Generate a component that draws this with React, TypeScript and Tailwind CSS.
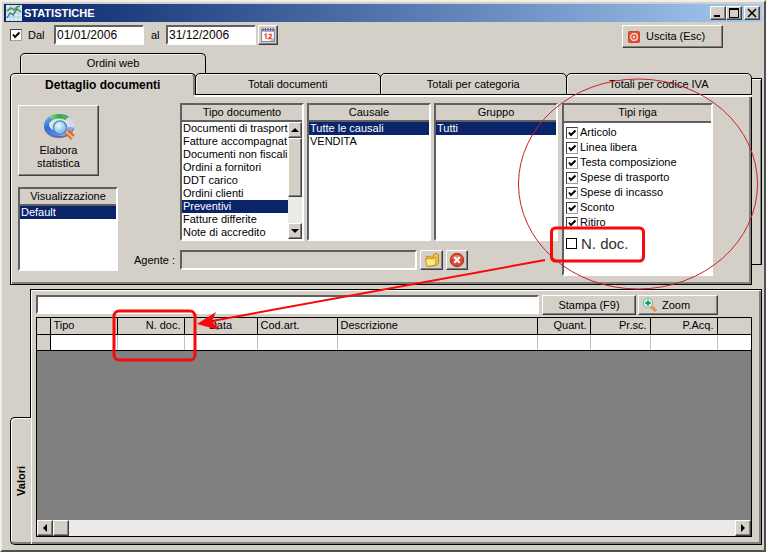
import React from 'react';
import clsx from 'clsx';

const raised =
  'bg-[#d4d0c8] border border-t-white border-l-white border-r-[#404040] border-b-[#404040] shadow-[inset_-1px_-1px_0_#808080]';
const sunken =
  'border-2 border-t-[#606060] border-l-[#606060] border-r-white border-b-white';

const documentTypes = [
  'Documenti di trasport',
  'Fatture accompagnat',
  'Documenti non fiscali',
  'Ordini a fornitori',
  'DDT carico',
  'Ordini clienti',
  'Preventivi',
  'Fatture differite',
  'Note di accredito',
];

const rowTypes = [
  'Articolo',
  'Linea libera',
  'Testa composizione',
  'Spese di trasporto',
  'Spese di incasso',
  'Sconto',
  'Ritiro',
];

const columns = [
  { title: '', width: 'w-[13px]', align: 'text-left' },
  { title: 'Tipo', width: 'w-[67px]', align: 'text-left' },
  { title: 'N. doc.', width: 'w-[67px]', align: 'text-right' },
  { title: 'Data', width: 'w-[73px]', align: 'text-center' },
  { title: 'Cod.art.', width: 'w-[80px]', align: 'text-left' },
  { title: 'Descrizione', width: '', align: 'text-left' },
  { title: 'Quant.', width: 'w-[53px]', align: 'text-right' },
  { title: 'Pr.sc.', width: 'w-[60px]', align: 'text-right' },
  { title: 'P.Acq.', width: 'w-[67px]', align: 'text-right' },
  { title: '', width: 'w-[34px]', align: 'text-left' },
];

const Arrow = ({ d }: { d: string }) => (
  <svg viewBox="0 0 8 8" className="size-2" fill="black">
    <path d={d} />
  </svg>
);

const ChartIcon = () => (
  <svg viewBox="0 0 16 16" className="size-4">
    <rect width="16" height="16" fill="#dcebf3" />
    <path d="M0 4H16M0 8H16M0 12H16M4 0V16M8 0V16M12 0V16" stroke="#9fc0d3" strokeWidth=".7" />
    <path d="M1 6L5 3L8 5L11 2L14 1" fill="none" stroke="#4b9a48" strokeWidth="1.6" />
    <path d="M1 13L4 8L7 10L11 4L15 7" fill="none" stroke="#3f7f6c" strokeWidth="1.4" />
  </svg>
);

const CalendarIcon = () => (
  <svg viewBox="0 0 16 16" className="size-4">
    <rect x="1.5" y="2.5" width="13" height="12" fill="#f8f7ff" stroke="#8289b4" />
    <path d="M2 3H14V5H2Z" fill="#aab0cf" />
    <path d="M3 1V4M5.5 1V4M8 1V4M10.5 1V4M13 1V4" stroke="#5d6074" />
    <path d="M4.5 8L6 7V12M8.5 8Q11.5 6 11.5 8.5L8.5 11.5H12" fill="none" stroke="#ed5a24" strokeWidth="1.4" />
    <path d="M10 14L14 10V14Z" fill="#b9bcdd" />
  </svg>
);

const ExitIcon = () => (
  <svg viewBox="0 0 12 12" className="size-3">
    <rect x=".5" y=".5" width="11" height="11" rx="1" fill="#df5437" stroke="#c8452c" />
    <circle cx="6" cy="6" r="3.4" fill="none" stroke="#ffe1d5" strokeWidth="1.2" />
    <circle cx="6" cy="6" r="1.2" fill="#ffe1d5" />
  </svg>
);

const AnalyzeIcon = () => (
  <svg viewBox="0 0 32 30" className="h-[30px] w-8">
    <defs>
      <linearGradient id="ringBlue" x1="0" y1="0" x2="1" y2="1">
        <stop offset="0" stopColor="#9cc8f2" />
        <stop offset=".35" stopColor="#2f6fd6" />
        <stop offset="1" stopColor="#7aa5ea" />
      </linearGradient>
      <linearGradient id="ringGreen" x1="0" y1="0" x2="1" y2="0">
        <stop offset="0" stopColor="#8ad98a" />
        <stop offset=".5" stopColor="#34b02c" />
        <stop offset="1" stopColor="#4fbf48" />
      </linearGradient>
      <radialGradient id="lens" cx=".4" cy=".35">
        <stop offset="0" stopColor="#effaff" />
        <stop offset="1" stopColor="#86c6ee" />
      </radialGradient>
    </defs>
    <ellipse cx="16" cy="15" rx="15" ry="11" fill="#5f68b4" />
    <ellipse cx="16" cy="13" rx="15" ry="11" fill="url(#ringBlue)" />
    <path d="M16 13L6 4.800Q14 0 26 4.800Z" fill="url(#ringGreen)" />
    <path d="M16 13L26 4.800Q33 9 30.500 16Z" fill="#d9d6f0" />
    <path d="M16 13L30.500 16Q28 23 17 24Z" fill="#a5a0da" />
    <ellipse cx="16" cy="13" rx="10" ry="6.500" fill="#dfe6f0" />
    <path d="M22 20L29 27M25 18.500L31 24" stroke="#d9722a" strokeWidth="2.500" />
    <path d="M23 19.500L29.500 25.500" stroke="#fbc48c" strokeWidth="1.500" />
    <circle cx="17" cy="15.500" r="6.600" fill="url(#lens)" stroke="#4f86c6" strokeWidth="1.400" />
  </svg>
);

const FolderIcon = () => (
  <svg viewBox="0 0 16 16" className="size-4">
    <path d="M2 5L6 4L7.500 5.500L9.500 5V2.500L13 1.500L14.500 3V11L12 13.500L3 14.500Z" fill="#f2c94a" stroke="#b78a1c" />
    <path d="M1.500 7L7 6.500L8.500 7L12 5L11.500 13L3 14.500Z" fill="#fdea7c" stroke="#c59a27" />
  </svg>
);

const CancelIcon = () => (
  <svg viewBox="0 0 16 16" className="size-4">
    <circle cx="8" cy="8" r="6.700" fill="#d9472b" stroke="#a8321d" />
    <path d="M3 6Q8 0 13 6Q8 8 3 6" fill="#ee8468" />
    <path d="M5.300 5.300L10.700 10.700M10.700 5.300L5.300 10.700" stroke="white" strokeWidth="2.200" />
  </svg>
);

const ZoomIcon = () => (
  <svg viewBox="0 0 16 16" className="size-4">
    <path d="M9 9L14 14" stroke="#d98532" strokeWidth="3" />
    <path d="M9.500 9L14 13.500" stroke="#ffc887" strokeWidth="1" />
    <circle cx="6" cy="6" r="4.700" fill="#d2f0e0" stroke="#7fb5a8" />
    <path d="M6 3.300V8.700M3.300 6H8.700" stroke="#159a54" strokeWidth="1.800" />
  </svg>
);

const CheckBox = ({ id, checked }: { id: string; checked?: boolean }) => (
  <span className="relative block size-3 shrink-0">
    <input
      id={id}
      type="checkbox"
      defaultChecked={checked}
      className="peer block size-3 appearance-none border border-t-[#404040] border-l-[#404040] border-r-[#a0a0a0] border-b-[#a0a0a0] bg-white"
    />
    <svg viewBox="0 0 12 12" className="pointer-events-none absolute inset-0 hidden size-3 peer-checked:block">
      <path d="M3 5.500L5 8L9.500 3.500" fill="none" stroke="black" strokeWidth="2" />
    </svg>
  </span>
);

type ListBoxProps = {
  title: string;
  items: string[];
  selected: string;
  className: string;
  scroll?: boolean;
};

const ListBox = ({ title, items, selected, className, scroll }: ListBoxProps) => (
  <div className={clsx(sunken, 'flex flex-col bg-white', className)}>
    <div className="h-[17px] shrink-0 border-b-2 border-[#606060] bg-[#d4d0c8] text-center leading-[15px]">
      {title}
    </div>
    <div className="flex min-h-0 flex-1">
      <ul role="listbox" aria-label={title} className="min-w-0 flex-1">
        {items.map((item) => (
          <li
            key={item}
            role="option"
            aria-selected={item === selected}
            className={clsx(
              'h-[13px] pl-px leading-[13px] whitespace-nowrap',
              item === selected && 'bg-[#0a246a] text-white'
            )}
          >
            {item}
          </li>
        ))}
      </ul>
      {scroll && (
        <div className="flex w-3.5 flex-col bg-[#eceae6]">
          <button aria-label="Su" className={clsx(raised, 'flex h-4 items-center justify-center')}>
            <Arrow d="M0 6L4 2L8 6Z" />
          </button>
          <div className={clsx(raised, 'h-[59px]')} />
          <button aria-label="Giù" className={clsx(raised, 'mt-auto flex h-4 items-center justify-center')}>
            <Arrow d="M0 2L4 6L8 2Z" />
          </button>
        </div>
      )}
    </div>
  </div>
);

const Tab = ({ label, active }: { label: string; active?: boolean }) => (
  <button
    role="tab"
    aria-selected={!!active}
    className={clsx(
      'h-full rounded-t-[5px] border border-black leading-[19px]',
      active
        ? 'border-b-0 pt-0.5 text-xs font-bold shadow-[inset_1px_1px_0_white,inset_-2px_0_0_#808080]'
        : '-ml-px shadow-[inset_1px_1px_0_#eeeeee,0_2px_0_white]'
    )}
  >
    {label}
  </button>
);

const TitleBar = () => (
  <header className="flex h-[18px] items-center bg-gradient-to-r from-[#0a246a] to-[#a6caf0] px-0.5">
    <ChartIcon />
    <h1 className="ml-0.5 flex-1 font-bold text-white">STATISTICHE</h1>
    <button aria-label="Riduci" className={clsx(raised, 'flex h-3.5 w-4 items-center justify-center')}>
      <svg viewBox="0 0 10 10" className="size-2.5">
        <path d="M1 8H7" stroke="black" strokeWidth="2" />
      </svg>
    </button>
    <button aria-label="Ingrandisci" className={clsx(raised, 'flex h-3.5 w-4 items-center justify-center')}>
      <svg viewBox="0 0 10 10" className="size-2.5">
        <path d="M.5 1V9.500H9.500V1" fill="none" stroke="black" />
        <path d="M0 1H10" stroke="black" strokeWidth="2" />
      </svg>
    </button>
    <button aria-label="Chiudi" className={clsx(raised, 'ml-0.5 flex h-3.5 w-4 items-center justify-center')}>
      <svg viewBox="0 0 10 10" className="size-2.5">
        <path d="M1 1L9 9M9 1L1 9" stroke="black" strokeWidth="1.600" />
      </svg>
    </button>
  </header>
);

const Toolbar = () => (
  <div className="flex items-start pt-[3px] pr-[39px] pl-1.5">
    <div className="flex h-5 items-center">
      <CheckBox id="dal" checked />
      <label htmlFor="dal" className="w-8 pl-1.5">Dal</label>
      <input aria-label="Dal" defaultValue="01/01/2006" className={clsx(sunken, 'h-5 w-[90px] bg-white pl-px text-xs')} />
      <label htmlFor="al" className="w-[22px] pl-[7px]">al</label>
      <input id="al" defaultValue="31/12/2006" className={clsx(sunken, 'h-5 w-[90px] bg-white pl-px text-xs')} />
      <button aria-label="Calendario" className={clsx(raised, 'ml-0.5 flex size-5 items-center justify-center')}>
        <CalendarIcon />
      </button>
    </div>
    <button className={clsx(raised, 'ml-auto flex h-[23px] w-[101px] items-center gap-1.5 pl-[5px]')}>
      <ExitIcon />
      Uscita (Esc)
    </button>
  </div>
);

const DetailPanel = () => (
  <div className="flex items-start border border-t-0 border-black pt-[9px] pb-2 pl-[7px] shadow-[inset_1px_0_0_white,inset_-2px_-2px_0_#808080]">
    <div className="w-[100px] pt-0.5">
      <button className={clsx(raised, 'flex h-[71px] w-[81px] flex-col items-center justify-center leading-[13px]')}>
        <AnalyzeIcon />
        <span className="mt-0.5">Elabora<br />statistica</span>
      </button>
      <ListBox title="Visualizzazione" items={['Default']} selected="Default" className="mt-[11px] h-[84px]" />
    </div>
    <div className="ml-4">
      <div className="flex gap-[3px] pl-[46px]">
        <ListBox title="Tipo documento" items={documentTypes} selected="Preventivi" scroll className="h-[138px] w-[124px]" />
        <ListBox title="Causale" items={['Tutte le causali', 'VENDITA']} selected="Tutte le causali" className="h-[138px] w-[124px]" />
        <ListBox title="Gruppo" items={['Tutti']} selected="Tutti" className="h-[138px] w-[124px]" />
      </div>
      <div className="mt-[9px] flex items-center">
        <label htmlFor="agente" className="w-[46px] whitespace-nowrap">Agente :</label>
        <input id="agente" readOnly className={clsx(sunken, 'h-5 w-[237px] bg-[#d4d0c8]')} />
        <button aria-label="Apri" className={clsx(raised, 'ml-[3px] flex h-5 w-[23px] items-center justify-center')}>
          <FolderIcon />
        </button>
        <button aria-label="Annulla" className={clsx(raised, 'ml-[3px] flex h-5 w-[22px] items-center justify-center')}>
          <CancelIcon />
        </button>
      </div>
    </div>
    <fieldset className={clsx(sunken, 'ml-1 h-[173px] w-[151px] bg-white')}>
      <div className="h-[18px] border-b-2 border-[#606060] bg-[#d4d0c8] text-center leading-[15px]">Tipi riga</div>
      <div className="pt-0.5 pl-0.5">
        {rowTypes.map((name) => (
          <div key={name} className="flex h-[15px] items-center gap-0.5">
            <CheckBox id={name} checked />
            <label htmlFor={name}>{name}</label>
          </div>
        ))}
        <div className="flex h-[26px] items-center gap-1">
          <input id="ndoc" type="checkbox" className="size-[11px] appearance-none border border-black bg-white" />
          <label htmlFor="ndoc" className="text-[15px] text-[#303030]">N. doc.</label>
        </div>
      </div>
    </fieldset>
  </div>
);

const ResultsPanel = () => (
  <section className="mt-1 mb-[3px] flex flex-1 pl-1.5">
    <button
      role="tab"
      aria-selected="true"
      className="relative z-10 -mr-px flex h-32 w-[21px] items-center justify-center self-end rounded-l-[5px] border border-r-0 border-black bg-[#d4d0c8] font-bold shadow-[inset_1px_1px_0_white,inset_0_-2px_0_#808080]"
    >
      <span className="rotate-180 [writing-mode:vertical-rl]">Valori</span>
    </button>
    <div className="flex min-w-0 flex-1 flex-col border border-black pt-[5px] pr-[9px] pb-[7px] pl-[5px] shadow-[inset_1px_1px_0_white,inset_-2px_-2px_0_#808080]">
      <div className="flex h-5 pr-[34px]">
        <input aria-label="Filtro" className={clsx(sunken, 'h-[19px] min-w-0 flex-1 bg-white')} />
        <button className={clsx(raised, 'ml-[3px] w-[94px]')}>Stampa (F9)</button>
        <button className={clsx(raised, 'ml-0.5 flex w-20 items-center gap-1 pl-[3px]')}>
          <ZoomIcon />
          Zoom
        </button>
      </div>
      <div className="mt-0.5 flex flex-1 flex-col border border-black bg-[#808080]">
        <table className="w-full table-fixed border-collapse">
          <thead>
            <tr className="h-4 bg-[#d4d0c8]">
              {columns.map((col, i) => (
                <th
                  key={i}
                  className={clsx(
                    'border-r border-b border-black px-[3px] py-0 leading-[15px] font-normal last:border-r-0',
                    col.width,
                    col.align
                  )}
                >
                  {col.title}
                </th>
              ))}
            </tr>
          </thead>
          <tbody>
            <tr className="h-4 bg-white">
              {columns.map((col, i) => (
                <td
                  key={i}
                  className={clsx(
                    'border-b border-b-black p-0 last:border-r-0',
                    i === 0 ? 'border-r border-r-black bg-[#d4d0c8]' : 'border-r border-r-[#c0c0c0]'
                  )}
                />
              ))}
            </tr>
          </tbody>
        </table>
        <div className="mt-auto flex h-4 bg-[#eceae6]">
          <button aria-label="Sinistra" className={clsx(raised, 'flex w-4 items-center justify-center')}>
            <Arrow d="M6 0L2 4L6 8Z" />
          </button>
          <div className={clsx(raised, 'w-4')} />
          <button aria-label="Destra" className={clsx(raised, 'ml-auto flex w-4 items-center justify-center')}>
            <Arrow d="M2 0L6 4L2 8Z" />
          </button>
        </div>
      </div>
    </div>
  </section>
);

// Red marks drawn over the window
const Annotations = () => (
  <svg viewBox="0 0 768 556" className="pointer-events-none absolute top-0 left-0 z-20 h-[556px] w-[768px]" fill="none">
    <ellipse cx="638" cy="184" rx="119.500" ry="105" stroke="#c8202c" />
    <rect x="551.500" y="228" width="92" height="33" rx="4" stroke="#f80808" strokeWidth="3" />
    <rect x="114" y="311" width="81" height="49" rx="5" stroke="#f80808" strokeWidth="3" />
    <path d="M545 260L212 321" stroke="#f80808" strokeWidth="2" />
    <path d="M197 324L216 312L212 321L219 330Z" fill="#f80808" />
  </svg>
);

const App: React.FC = () => {
  return (
    <div className="relative flex min-h-screen flex-col bg-white pr-0.5 pb-1 font-['Liberation_Sans',Arial,sans-serif] text-[11px] leading-[13px] text-black">
      <main className="flex flex-1 flex-col border-2 border-t-[#f0eeea] border-r-[#505050] border-b-[#505050] border-l-[#f0eeea] bg-[#d4d0c8] p-0.5">
        <TitleBar />
        <Toolbar />
        <div className="mt-[5px] h-5 pl-4">
          <button
            role="tab"
            aria-selected="false"
            className="h-5 w-[186px] rounded-t-[5px] border border-b-0 border-black shadow-[inset_1px_1px_0_#eeeeee]"
          >
            Ordini web
          </button>
        </div>
        <div className="flex pl-1.5">
          <div className="min-w-0 flex-1">
            <div role="tablist" className="relative z-10 grid h-[21px] grid-cols-4">
              <Tab label="Dettaglio documenti" active />
              <Tab label="Totali documenti" />
              <Tab label="Totali per categoria" />
              <Tab label="Totali per codice IVA" />
            </div>
            <DetailPanel />
          </div>
          <div className="mt-[5px] mb-5 w-2.5 border border-l-0 border-black shadow-[inset_0_1px_0_white,inset_-1px_0_0_#808080]" />
        </div>
        <ResultsPanel />
      </main>
      <Annotations />
    </div>
  );
};

export default App;
